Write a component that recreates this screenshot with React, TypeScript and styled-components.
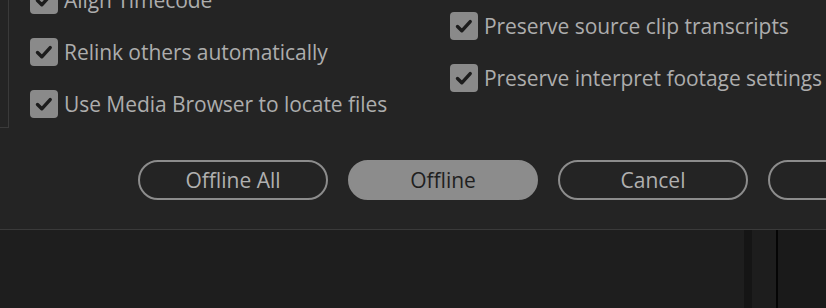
import React from "react";
import styled, { createGlobalStyle } from "styled-components";

const GlobalStyle = createGlobalStyle`
  html, body {
    margin: 0;
    padding: 0;
    background: #1c1c1c;
    overflow: hidden;
  }
  body {
    font-family: "Open Sans", Lato, sans-serif;
  }
`;

const Page = styled.div`
  width: 826px;
  height: 308px;
  display: flex;
  flex-direction: column;
  overflow: hidden;
`;

const Dialog = styled.div`
  height: 229px;
  flex-shrink: 0;
  background: #242424;
  border-bottom: 1px solid #3a3a3a;
  display: flex;
  flex-direction: column;
  overflow: hidden;
`;

const Options = styled.div`
  display: flex;
  align-items: flex-start;
  height: 160px;
`;

const GroupEdge = styled.div`
  width: 8px;
  height: 127px;
  flex-shrink: 0;
  border-right: 1px solid #3a3a3a;
  border-bottom: 1px solid #3a3a3a;
`;

const Column = styled.div<{ $top: number; $pad: number; $width?: number }>`
  display: flex;
  flex-direction: column;
  gap: 24px;
  margin-top: ${(p) => p.$top}px;
  padding-left: ${(p) => p.$pad}px;
  width: ${(p) => (p.$width ? `${p.$width}px` : "auto")};
  flex-shrink: 0;
  box-sizing: border-box;
`;

const Row = styled.label`
  display: flex;
  align-items: center;
  gap: 6px;
  height: 28px;
  color: #adadad;
  font-size: 21px;
  letter-spacing: -0.05px;
  white-space: nowrap;
`;

const Box = styled.span`
  width: 28px;
  height: 28px;
  border-radius: 4px;
  background: #8a8a8a;
  display: flex;
  align-items: center;
  justify-content: center;
  flex-shrink: 0;
`;

const Buttons = styled.div`
  display: flex;
  gap: 20px;
  padding-left: 138px;
`;

const Button = styled.button<{ $primary?: boolean }>`
  width: 190px;
  height: 40px;
  flex-shrink: 0;
  box-sizing: border-box;
  border-radius: 20px;
  border: 2px solid #8c8c8c;
  background: ${(p) => (p.$primary ? "#8c8c8c" : "transparent")};
  color: ${(p) => (p.$primary ? "#1f1f1f" : "#b0b0b0")};
  font-family: "Open Sans", Lato, sans-serif;
  font-size: 21px;
  line-height: 1;
  padding: 0;
`;

const Lower = styled.div`
  flex: 1;
  display: flex;
`;

const Pane = styled.div<{ $w?: number; $bg: string }>`
  width: ${(p) => (p.$w ? `${p.$w}px` : "auto")};
  flex: ${(p) => (p.$w ? "none" : "1")};
  background: ${(p) => p.$bg};
`;

const Check = () => (
  <svg width="28" height="28" viewBox="0 0 28 28">
    <path
      d="M7.5 14.5 L11.8 18.8 L20.2 9.6"
      fill="none"
      stroke="#1c1c1c"
      strokeWidth="3.4"
      strokeLinecap="round"
      strokeLinejoin="round"
    />
  </svg>
);

const Option = ({ label }: { label: string }) => (
  <Row>
    <Box>
      <Check />
    </Box>
    {label}
  </Row>
);

const App = () => (
  <Page>
    <GlobalStyle />
    <Dialog>
      <Options>
        <GroupEdge />
        <Column $top={-14} $pad={21} $width={441}>
          <Option label="Align Timecode" />
          <Option label="Relink others automatically" />
          <Option label="Use Media Browser to locate files" />
        </Column>
        <Column $top={12} $pad={0}>
          <Option label="Preserve source clip transcripts" />
          <Option label="Preserve interpret footage settings" />
        </Column>
      </Options>
      <Buttons>
        <Button>Offline All</Button>
        <Button $primary>Offline</Button>
        <Button>Cancel</Button>
        <Button>OK</Button>
      </Buttons>
    </Dialog>
    <Lower>
      <Pane $w={744} $bg="#1e1e1e" />
      <Pane $w={8} $bg="#151515" />
      <Pane $w={24} $bg="#1d1d1d" />
      <Pane $w={2} $bg="#050505" />
      <Pane $bg="#1a1a1a" />
    </Lower>
  </Page>
);

export default App;
